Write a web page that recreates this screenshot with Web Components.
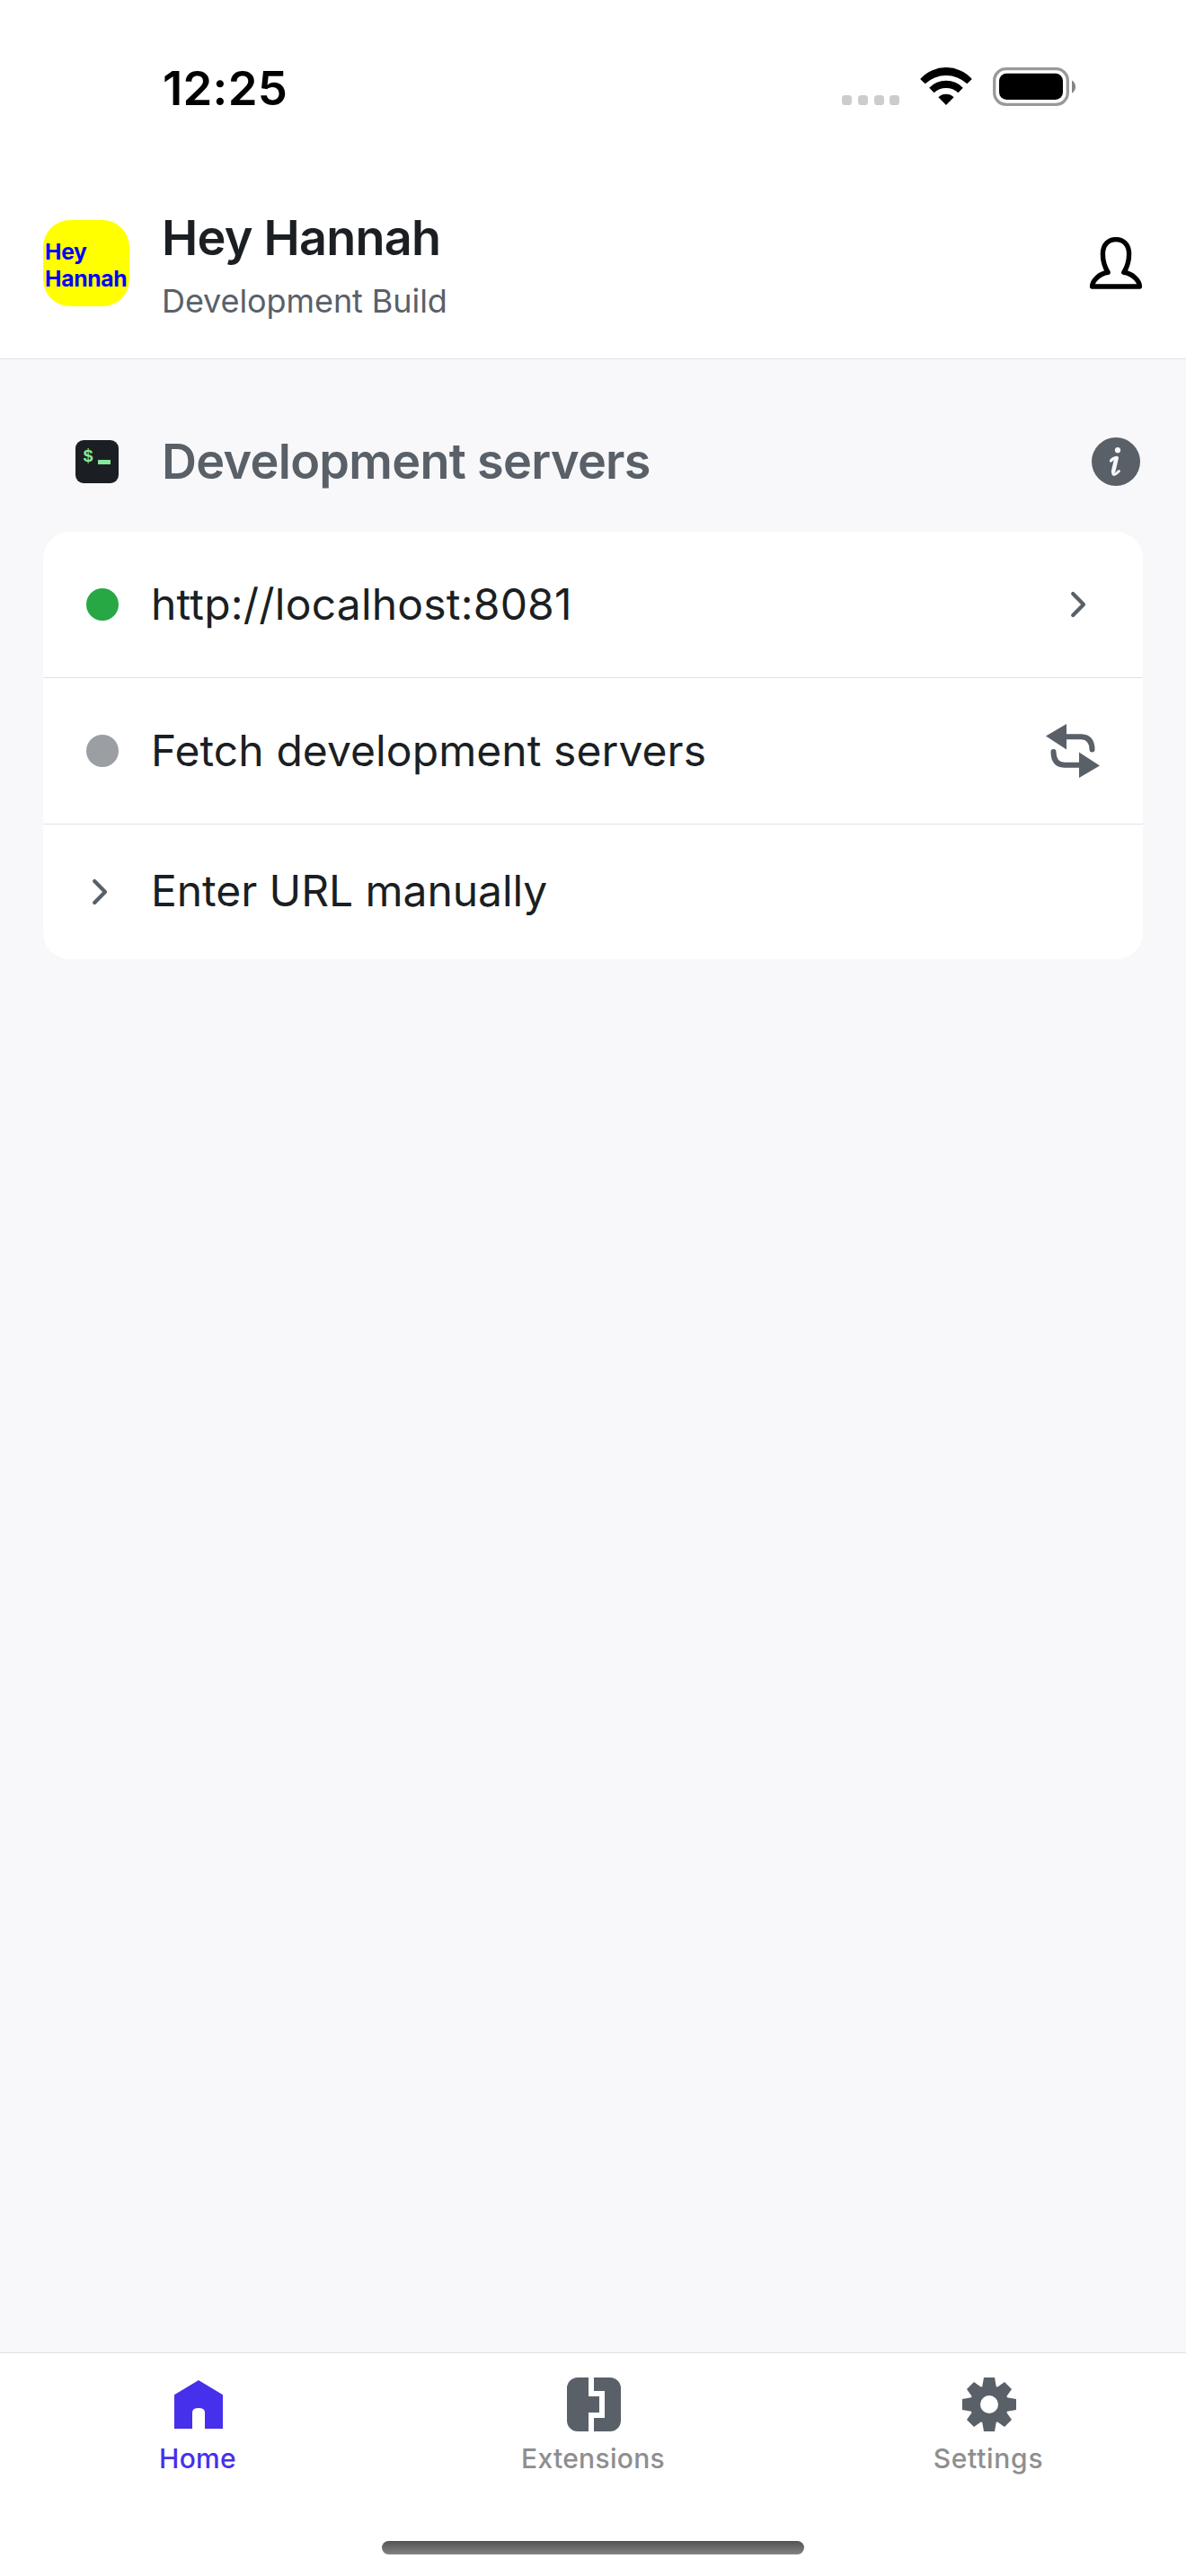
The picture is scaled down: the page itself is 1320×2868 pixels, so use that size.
<!DOCTYPE html>
<html lang="en">
<head>
<meta charset="utf-8">
<title>Hey Hannah</title>
<style>
html, body { margin: 0; background: #f8f8fa; }
body { font-family: Inter, "Liberation Sans", sans-serif; color: #1b1f23; }
</style>
</head>
<body>
<launcher-app></launcher-app>
<script>
const define = (name, markup) => {
  const template = document.createElement('template');
  template.innerHTML = markup;
  customElements.define(name, class extends HTMLElement {
    constructor() {
      super();
      this.attachShadow({ mode: 'open' }).append(template.content.cloneNode(true));
    }
  });
};

define('status-bar', `
<style>
:host { display: flex; justify-content: space-between; align-items: flex-start; box-sizing: border-box; height: 200px; padding: 68px 122px 0 181px; color: #000; }
.time { font-size: 52.7px; font-weight: 600; line-height: 60px; letter-spacing: .25px; }
.indicators { display: flex; align-items: flex-start; padding-top: 7px; }
svg { display: block; }
.wifi { margin: 0 23px 0 23px; }
</style>
<span class="time">12:25</span>
<div class="indicators">
  <svg width="65" height="43" fill="#ccc"><rect x="1" y="31" width="11" height="11" rx="3.6"/><rect x="19" y="31" width="11" height="11" rx="3.6"/><rect x="37" y="31" width="11" height="11" rx="3.6"/><rect x="54" y="31" width="11" height="11" rx="3.6"/></svg>
  <svg class="wifi" width="58" height="43"><path d="M.2 13A38.6 38.6 0 0 1 57.8 13L52.4 18.3A34.3 34.3 0 0 0 5.6 18.3Z M10.2 22.7A26.3 26.3 0 0 1 47.8 22.7L42.5 28.3A20 20 0 0 0 15.5 28.3Z M20.4 33.3A12.5 12.5 0 0 1 37.6 33.3L29 42Z"/></svg>
  <svg width="93" height="43"><rect x="1.7" y="1.7" width="81.6" height="39.6" rx="13" fill="none" stroke="#999" stroke-width="3.3"/><rect x="7" y="6.8" width="71" height="29.2" rx="8.3"/><path d="M88 14.6A8.2 8.2 0 0 1 88 28.7Z" fill="#858585"/></svg>
</div>`);

define('app-badge', `
<style>
:host { display: flex; flex-direction: column; box-sizing: border-box; width: 96px; height: 96px; padding: 19.5px 0 0 2px; border-radius: 30px; background: #ff0; color: #00f; font-size: 24.7px; font-weight: 700; line-height: 30.7px; letter-spacing: -.3px; white-space: nowrap; }
</style>
<span>Hey</span><span>Hannah</span>`);

define('app-header', `
<style>
:host { display: flex; align-items: flex-start; box-sizing: border-box; height: 200px; padding: 0 48px; border-bottom: 1px solid #e1e1e4; }
app-badge { margin-top: 45px; }
.names { flex: 1; display: flex; flex-direction: column; gap: 15px; padding: 31.5px 0 0 36px; }
.title { font-size: 54px; font-weight: 600; line-height: 66px; letter-spacing: -.77px; }
.subtitle { font-size: 36px; line-height: 44px; letter-spacing: -.08px; color: #596068; }
svg { display: block; margin-top: 64px; }
</style>
<app-badge></app-badge>
<div class="names"><span class="title"><slot name="title"></slot></span><span class="subtitle"><slot name="subtitle"></slot></span></div>
<svg width="60" height="60" fill="none" stroke="#000" stroke-width="5.4" stroke-linejoin="round"><path d="M21.2 39.3C17 32.5 15.4 26 15.4 19C15.4 8 22 2.6 30 2.6C38 2.6 44.6 8 44.6 19C44.6 26 43 32.5 38.8 39.3C48.5 40.5 56.4 48.5 56.4 55H3.6C3.6 48.5 11.5 40.5 21.2 39.3Z"/></svg>`);

define('section-heading', `
<style>
:host { display: flex; align-items: center; height: 66px; padding: 0 3px 0 36px; color: #596068; }
.label { flex: 1; padding-left: 48px; font-size: 54px; font-weight: 600; line-height: 66px; letter-spacing: -.7px; }
svg { display: block; }
text { font: 700 19.5px "Liberation Mono", monospace; }
</style>
<svg width="48" height="48"><rect width="48" height="48" rx="9" fill="#1b1f23"/><text x="8.2" y="23.8" fill="#86e99a">$</text><rect x="25" y="22" width="14" height="5" fill="#86e99a"/></svg>
<span class="label"><slot></slot></span>
<svg width="54" height="54" fill="none" stroke="#f8f8fa" stroke-linecap="round" stroke-linejoin="round"><circle cx="27" cy="27" r="27" fill="#596068" stroke="none"/><circle cx="29" cy="14.2" r="3.1" fill="#f8f8fa" stroke="none"/><path d="M21.4 26Q24 22.6 27.8 22.6" stroke-width="3.2"/><path d="M27.6 23L24.2 37.5" stroke-width="4.6"/><path d="M23.8 38.5Q23.2 41.6 25.4 41.2Q27.6 40.7 30.4 37.6" stroke-width="3"/></svg>`);

define('list-row', `
<style>
:host { display: flex; align-items: center; box-sizing: border-box; height: 162px; padding: 0 48px; }
:host([divided]) { height: 163px; border-bottom: 1px solid #e1e4e8; }
:host([short]) { height: 150px; }
.label { flex: 1; padding-left: 36px; font-size: 48px; line-height: 60px; letter-spacing: var(--tracking, .07px); }
:host([short]) .label { padding-bottom: 3px; }
</style>
<slot name="lead"></slot><span class="label"><slot></slot></span><slot name="trail"></slot>`);

define('status-dot', `
<style>:host { display: block; width: 36px; height: 36px; border-radius: 50%; background: var(--dot, #9b9ea3); }</style>`);

define('chevron-icon', `
<style>:host { display: block; } svg { display: block; }</style>
<svg width="36" height="48" fill="none" stroke="#596068" stroke-width="4.2" stroke-linecap="round" stroke-linejoin="round"><path d="M9.2 12L21 24L9.2 36"/></svg>`);

define('refresh-icon', `
<style>:host { display: block; } svg { display: block; }</style>
<svg width="60" height="60" fill="#596068"><path d="M0 13.6L23 0V28.4ZM60 46.4L37 60V31.5Z"/><path d="M22 14.3H39.5Q51.5 14.8 51.5 28.6M38 45.8H20.5Q8.5 45.2 8.5 31" fill="none" stroke="#596068" stroke-width="6" stroke-linecap="round"/></svg>`);

define('server-card', `
<style>
:host { display: flex; flex-direction: column; background: #fff; border-radius: 30px; overflow: hidden; }
.right { margin-right: 3px; }
</style>
<list-row divided style="--tracking:.2px"><status-dot slot="lead" style="--dot:#28a745"></status-dot>http://localhost:8081<chevron-icon class="right" slot="trail"></chevron-icon></list-row>
<list-row divided><status-dot slot="lead"></status-dot>Fetch development servers<refresh-icon slot="trail"></refresh-icon></list-row>
<list-row short style="--tracking:-.07px"><chevron-icon slot="lead"></chevron-icon>Enter URL manually</list-row>`);

define('tab-item', `
<style>
:host { flex: 1; display: flex; flex-direction: column; align-items: center; gap: 12px; color: #8e8e8f; }
:host([active]) { color: #4630eb; }
.icon { display: flex; width: 60px; height: 60px; padding-left: 2px; }
.label { font-size: 30px; font-weight: 500; line-height: 36px; letter-spacing: var(--tracking, .3px); }
</style>
<div class="icon"><slot name="icon"></slot></div><span class="label"><slot></slot></span>`);

define('tab-bar', `
<style>
:host { display: flex; flex-direction: column; align-items: center; box-sizing: border-box; height: 249px; border-top: 1px solid #e1e1e4; background: #fff; }
.tabs { display: flex; align-self: stretch; height: 182px; padding-top: 27px; }
.grabber { width: 470px; height: 15px; border-radius: 7.5px; background: linear-gradient(#535353, #828282); }
svg { display: block; }
</style>
<div class="tabs">
  <tab-item active><svg slot="icon" width="60" height="60" fill="#4630eb"><path d="M3 19.3L30 3L57 19.3V57H37V39Q37 34 30 34Q23 34 23 39V57H3Z"/></svg>Home</tab-item>
  <tab-item><svg slot="icon" width="60" height="60" fill="#596068"><path d="M12 0H24V21H36V39H24V60H12A12 12 0 0 1 0 48V12A12 12 0 0 1 12 0ZM30 0H48A12 12 0 0 1 60 12V48A12 12 0 0 1 48 60H30V45H42V15H30Z"/></svg>Extensions</tab-item>
  <tab-item style="--tracking:.7px"><svg slot="icon" width="60" height="60" fill="#596068" fill-rule="evenodd"><path d="M24 0H36L37.8 10.2L39.3 10.5L47 5L55 13L49.5 20.7L50 22.2L60 24V36L50 37.8L49.5 39.3L55 47L47 55L39.3 49.5L37.8 49.8L36 60H24L22.2 49.8L20.7 49.5L13 55L5 47L10.5 39.3L10 37.8L0 36V24L10 22.2L10.5 20.7L5 13L13 5L20.7 10.5L22.2 10.2ZM30 20A10 10 0 1 0 30 40A10 10 0 1 0 30 20Z"/></svg>Settings</tab-item>
</div>
<div class="grabber"></div>`);

define('launcher-app', `
<style>
:host { display: flex; flex-direction: column; width: 1320px; height: 2868px; background: #f8f8fa; }
.top { background: #fff; }
main { flex: 1; display: flex; flex-direction: column; gap: 45px; padding: 81px 48px 0; }
</style>
<div class="top">
  <status-bar></status-bar>
  <app-header><span slot="title">Hey Hannah</span><span slot="subtitle">Development Build</span></app-header>
</div>
<main>
  <section-heading>Development servers</section-heading>
  <server-card></server-card>
</main>
<tab-bar></tab-bar>`);
</script>
</body>
</html>
